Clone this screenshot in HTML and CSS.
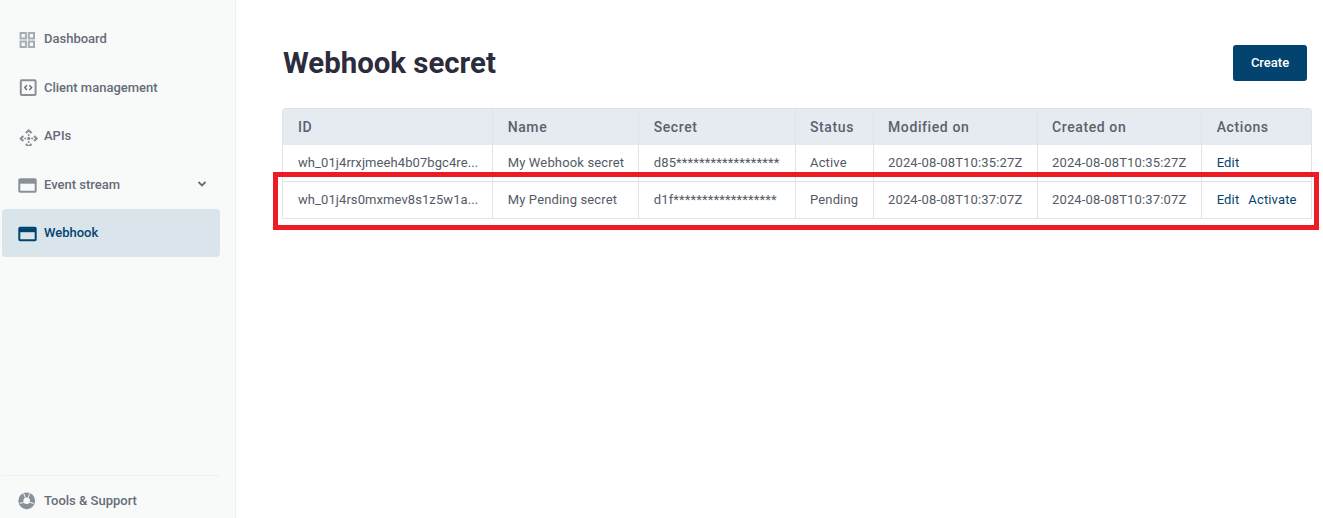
FILE: index.html
```html
<!DOCTYPE html>
<html lang="en">
<head>
<meta charset="utf-8">
<title>Webhook secret</title>
<link rel="stylesheet" href="styles.css">
</head>
<body>
<div class="app">
  <aside class="sidebar">
    <nav class="nav">
      <a class="nav-item">
        <svg class="icon icon-light" viewBox="0 0 20 20"><path d="M2.600 3.900h5.300v5.500H2.600zM10.800 3.900h5.200v5.500h-5.200zM2.600 12.600h5.300v5.300H2.600zM10.800 12.600h5.200v5.300h-5.200z" fill="none" stroke="currentColor" stroke-width="2"/></svg>
        <span>Dashboard</span>
      </a>
      <a class="nav-item">
        <svg class="icon" viewBox="0 0 20 20"><rect x="2.800" y="3.300" width="14.800" height="14.700" rx="1" fill="none" stroke="currentColor" stroke-width="2"/><path d="M9 8.300 6.800 10.600 9 12.900M11.400 8.300l2.200 2.300-2.200 2.300" fill="none" stroke="#666c78" stroke-width="1.400"/></svg>
        <span>Client management</span>
      </a>
      <a class="nav-item">
        <svg class="icon" viewBox="0 0 20 20"><path d="M7.800 7 10.700 4.500 13.600 7M7.800 18l2.900 2.500 2.900-2.500M5.300 10l-2.500 2.500 2.500 2.500M16.100 10l2.500 2.500-2.500 2.500" fill="none" stroke="currentColor" stroke-width="2.200"/><circle cx="10.700" cy="12.500" r="1.700" fill="currentColor"/><circle cx="10.700" cy="9" r="1" fill="currentColor"/><circle cx="10.700" cy="16" r="1" fill="currentColor"/><circle cx="7.200" cy="12.500" r="1" fill="currentColor"/><circle cx="14.200" cy="12.500" r="1" fill="currentColor"/></svg>
        <span>APIs</span>
      </a>
      <a class="nav-item">
        <svg class="icon" viewBox="0 0 20 20"><rect x="1.300" y="5.200" width="16.400" height="12.600" rx=".8" fill="none" stroke="currentColor" stroke-width="2"/><path d="M1.300 7.700h16.400" stroke="currentColor" stroke-width="4"/></svg>
        <span class="nav-label">Event stream</span>
        <svg class="chevron" viewBox="0 0 10 10"><path d="M1.500 3 5 6.500 8.500 3" fill="none" stroke="currentColor" stroke-width="1.800"/></svg>
      </a>
      <a class="nav-item active">
        <svg class="icon" viewBox="0 0 20 20"><rect x="1.300" y="4.700" width="16.400" height="12.600" rx=".8" fill="none" stroke="currentColor" stroke-width="2"/><path d="M1.300 7.200h16.400" stroke="currentColor" stroke-width="4"/></svg>
        <span>Webhook</span>
      </a>
    </nav>
    <div class="sidebar-foot">
      <a class="nav-item">
        <svg class="icon" viewBox="0 0 20 20"><circle cx="8.700" cy="10.800" r="8.400" fill="currentColor"/><circle cx="8.700" cy="10.800" r="3.300" fill="#f8faf9"/><path d="M5.600 3.400 7.400 7.800M11.800 3.400 10 7.800M1.700 13.400l4-1M15.700 13.400l-4-1" stroke="#f8faf9" stroke-width="1"/></svg>
        <span>Tools &amp; Support</span>
      </a>
    </div>
  </aside>
  <main class="main">
    <header class="page-head">
      <h1 class="title">Webhook secret</h1>
      <button class="btn" type="button">Create</button>
    </header>
    <div class="table-wrap">
      <table class="table">
        <colgroup>
          <col class="c-id"><col class="c-name"><col class="c-secret"><col class="c-status"><col class="c-date"><col class="c-date"><col class="c-actions">
        </colgroup>
        <thead>
          <tr><th>ID</th><th>Name</th><th>Secret</th><th>Status</th><th>Modified on</th><th>Created on</th><th>Actions</th></tr>
        </thead>
        <tbody>
          <tr>
            <td class="id-cell">wh_01j4rrxjmeeh4b07bgc4re...</td><td>My Webhook secret</td><td>d85******************</td><td>Active</td><td>2024-08-08T10:35:27Z</td><td>2024-08-08T10:35:27Z</td>
            <td><a class="link">Edit</a></td>
          </tr>
          <tr class="row-last">
            <td class="id-cell">wh_01j4rs0mxmev8s1z5w1a...</td><td>My Pending secret</td><td>d1f******************</td><td>Pending</td><td>2024-08-08T10:37:07Z</td><td>2024-08-08T10:37:07Z</td>
            <td><a class="link">Edit</a><a class="link">Activate</a></td>
          </tr>
        </tbody>
      </table>
      <div class="highlight"></div>
    </div>
  </main>
</div>
</body>
</html>
```

FILE: styles.css
```css
* { box-sizing: border-box; }
html, body { margin: 0; height: 100%; }
body {
  font-family: Roboto, "Liberation Sans", sans-serif;
  background: #fff;
  color: #4a4f5c;
  overflow: hidden;
}
.app { display: flex; height: 518px; }

.sidebar {
  width: 236px;
  flex: none;
  background: #f8faf9;
  border-right: 1px solid #eef0f1;
  padding: 14.5px 15px 0 2px;
  display: flex;
  flex-direction: column;
  justify-content: space-between;
}
.nav { display: flex; flex-direction: column; gap: 0.5px; }
.nav-item {
  display: flex;
  align-items: center;
  height: 48px;
  padding: 0 16px;
  border-radius: 4px;
  font-size: 13px;
  font-weight: 500;
  color: #666c78;
}
.icon { width: 20px; height: 20px; flex: none; margin-right: 6px; color: #8a9099; }
.icon-light { color: #a6adb3; }
.nav-label { flex: 1; }
.chevron { width: 10px; height: 10px; flex: none; margin-right: -3px; color: #666c78; }
.nav-item.active { background: #d9e4eb; color: #034370; }
.nav-item.active .icon { color: #034370; }
.sidebar-foot { border-top: 1px solid #eef0f1; height: 43px; }

.main { flex: 1; min-width: 0; padding: 45px 11px 0 46px; }
.page-head {
  display: flex;
  justify-content: space-between;
  align-items: center;
  height: 36px;
  margin-bottom: 27px;
  padding: 0 5px 0 1px;
}
.title { margin: 0; font-size: 29.4px; font-weight: 700; color: #2b2c3c; }
.btn {
  width: 74px;
  height: 36px;
  border: 0;
  border-radius: 3px;
  padding: 0 0 2px;
  background: #034370;
  color: #fff;
  font: 500 13px Roboto, sans-serif;
}

.table-wrap { position: relative; }
.table {
  width: 1030px;
  border-collapse: separate;
  border-spacing: 0;
  table-layout: fixed;
  font-size: 13px;
  letter-spacing: 0.15px;
}
.c-id { width: 211px; }
.c-name { width: 146px; }
.c-secret { width: 157px; }
.c-status { width: 78px; }
.c-date { width: 164px; }
.c-actions { width: 110px; }
.table th, .table td {
  text-align: left;
  padding: 0 13px 0 14px;
  white-space: nowrap;
  overflow: hidden;
  border-right: 1px solid #e1e3e4;
}
.table th:first-child, .table td:first-child {
  border-left: 1px solid #e1e3e4;
  padding-left: 15px;
}
.table th:nth-child(2), .table td:nth-child(2),
.table th:nth-child(3), .table td:nth-child(3),
.table th:nth-child(7), .table td:nth-child(7) { padding-left: 14.7px; }
.table th {
  height: 37px;
  background: #e6ebf2;
  font-size: 14px;
  font-weight: 500;
  letter-spacing: 0.6px;
  color: #5c616c;
  border-top: 1px solid #e1e3e4;
}
.table th:first-child { border-top-left-radius: 4px; }
.table th:last-child { border-top-right-radius: 4px; }
.table td { height: 36px; padding-bottom: 2px; color: #555a66; }
.table td.id-cell { letter-spacing: 0.08px; }
.row-last td {
  height: 38px;
  border-top: 1px solid #e1e3e4;
  border-bottom: 1px solid #e1e3e4;
}
.link { color: #034370; margin-right: 9px; }
.highlight {
  position: absolute;
  left: -9px;
  top: 64px;
  width: 1046px;
  height: 58px;
  border: 5px solid #ed1c24;
  pointer-events: none;
}
```
